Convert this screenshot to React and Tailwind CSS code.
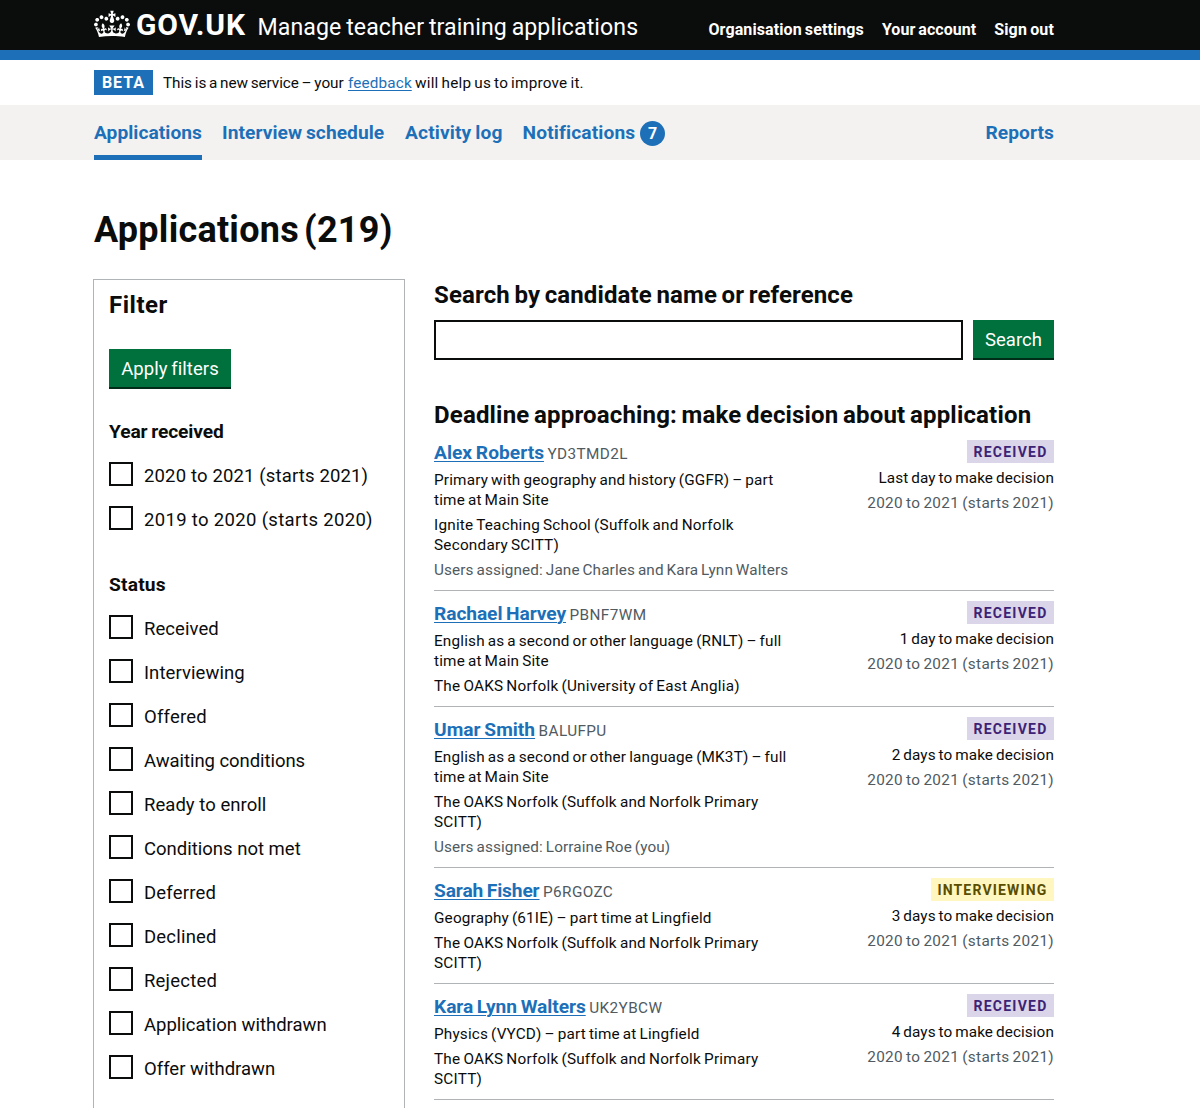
import React from 'react';

const years = [
  { label: '2020 to 2021 (starts 2021)', tracking: 'tracking-[0.15px]' },
  { label: '2019 to 2020 (starts 2020)', tracking: 'tracking-[0.33px]' },
];

const statuses = [
  { label: 'Received', tracking: 'tracking-[0.06px]' },
  { label: 'Interviewing', tracking: 'tracking-[0.08px]' },
  { label: 'Offered', tracking: 'tracking-[0.2px]' },
  { label: 'Awaiting conditions', tracking: 'tracking-[-0.06px]' },
  { label: 'Ready to enroll', tracking: 'tracking-[0.04px]' },
  { label: 'Conditions not met' },
  { label: 'Deferred', tracking: 'tracking-[0.2px]' },
  { label: 'Declined', tracking: 'tracking-[0.2px]' },
  { label: 'Rejected', tracking: 'tracking-[0.2px]' },
  { label: 'Application withdrawn' },
  { label: 'Offer withdrawn' },
];

const applications = [
  {
    name: 'Alex Roberts',
    tracking: 'tracking-[0px]',
    reference: 'YD3TMD2L',
    course: ['Primary with geography and history (GGFR) – part', 'time at Main Site'],
    provider: ['Ignite Teaching School (Suffolk and Norfolk', 'Secondary SCITT)'],
    users: 'Users assigned: Jane Charles and Kara Lynn Walters',
    status: 'Received',
    deadline: 'Last day to make decision',
  },
  {
    name: 'Rachael Harvey',
    tracking: 'tracking-[-0.09px]',
    reference: 'PBNF7WM',
    course: ['English as a second or other language (RNLT) – full', 'time at Main Site'],
    provider: ['The OAKS Norfolk (University of East Anglia)'],
    status: 'Received',
    deadline: '1 day to make decision',
  },
  {
    name: 'Umar Smith',
    tracking: 'tracking-[0px]',
    reference: 'BALUFPU',
    course: ['English as a second or other language (MK3T) – full', 'time at Main Site'],
    provider: ['The OAKS Norfolk (Suffolk and Norfolk Primary', 'SCITT)'],
    users: 'Users assigned: Lorraine Roe (you)',
    status: 'Received',
    deadline: '2 days to make decision',
  },
  {
    name: 'Sarah Fisher',
    tracking: 'tracking-[-0.14px]',
    reference: 'P6RGOZC',
    course: ['Geography (61IE) – part time at Lingfield'],
    provider: ['The OAKS Norfolk (Suffolk and Norfolk Primary', 'SCITT)'],
    status: 'Interviewing',
    deadline: '3 days to make decision',
  },
  {
    name: 'Kara Lynn Walters',
    tracking: 'tracking-[-0.07px]',
    reference: 'UK2YBCW',
    course: ['Physics (VYCD) – part time at Lingfield'],
    provider: ['The OAKS Norfolk (Suffolk and Norfolk Primary', 'SCITT)'],
    status: 'Received',
    deadline: '4 days to make decision',
  },
];

function Crown() {
  return (
    <svg aria-hidden="true" viewBox="0 0 132 97" className="h-[30px] w-9 shrink-0" fill="currentColor" fillRule="evenodd">
      <path d="M25 30.2c3.5 1.5 7.7-.2 9.1-3.7 1.5-3.6-.2-7.8-3.9-9.2-3.6-1.4-7.6.3-9.1 3.9-1.4 3.5.3 7.5 3.9 9zM9 39.5c3.6 1.5 7.8-.2 9.2-3.7 1.5-3.6-.2-7.8-3.9-9.1-3.6-1.5-7.6.2-9.1 3.8-1.4 3.5.3 7.5 3.8 9zM4.4 57.2c3.5 1.5 7.7-.2 9.1-3.8 1.5-3.6-.2-7.7-3.9-9.1-3.5-1.5-7.6.3-9.1 3.8-1.4 3.5.3 7.6 3.9 9.1zm38.3-21.4c3.5 1.5 7.7-.2 9.1-3.8 1.5-3.6-.2-7.7-3.9-9.1-3.6-1.5-7.6.3-9.1 3.8-1.3 3.6.4 7.7 3.9 9.1zm64.4-5.6c-3.6 1.5-7.8-.2-9.1-3.7-1.5-3.6.2-7.8 3.8-9.2 3.6-1.4 7.7.3 9.2 3.9 1.3 3.5-.4 7.5-3.9 9zm15.9 9.3c-3.6 1.5-7.7-.2-9.1-3.7-1.5-3.6.2-7.8 3.7-9.1 3.6-1.5 7.7.2 9.2 3.8 1.5 3.5-.3 7.5-3.8 9zm4.7 17.7c-3.6 1.5-7.8-.2-9.2-3.8-1.5-3.6.2-7.7 3.9-9.1 3.6-1.5 7.7.3 9.2 3.8 1.3 3.5-.4 7.6-3.9 9.1zM89.3 35.8c-3.6 1.5-7.8-.2-9.2-3.8-1.4-3.6.2-7.7 3.9-9.1 3.6-1.5 7.7.3 9.2 3.8 1.4 3.6-.3 7.7-3.9 9.1zM69.7 17.7l8.9 4.7V9.3l-8.9 2.8c-.2-.3-.5-.6-.9-.9L72.4 0H59.6l3.5 11.2c-.3.3-.6.5-.9.9l-8.8-2.8v13.1l8.8-4.7c.3.3.6.7.9.9l-5 15.4v.1c-.2.8-.4 1.6-.4 2.4 0 4.1 3.1 7.5 7 8.1h.2c.3 0 .7.1 1 .1.4 0 .7 0 1-.1h.2c4-.6 7.1-4.1 7.1-8.1 0-.8-.1-1.7-.4-2.4V34l-5.1-15.4c.4-.2.7-.6 1-.9zM66 92.8c16.9 0 32.8 1.1 47.1 3.2 4-16.9 8.9-26.7 14-33.5l-9.6-3.4c1 4.9 1.1 7.2 0 10.2-1.5-1.4-3-4.3-4.2-8.7L108.6 76c2.8-2 5-3.2 7.5-3.3-4.4 9.4-10 11.9-13.6 11.2-4.3-.8-6.3-4.6-5.6-7.9 1-4.7 5.7-5.9 8-.5 4.3-8.7-3-11.4-7.6-8.8 7.1-7.2 7.9-13.5 2.1-21.1-8 6.1-8.1 12.3-4.5 20.8-4.7-5.4-12.1-2.5-9.5 6.2 3.4-5.2 7.9-2 7.2 3.1-.6 4.3-6.4 7.8-13.5 7.2-10.3-.9-10.9-8-11.2-13.8 2.5-.5 7.1 1.8 11 7.3L80.2 60c-4.1 4.4-8 5.3-12.3 5.4 1.4-4.4 8-11.6 8-11.6H55.5s6.4 7.2 7.9 11.6c-4.2-.1-8-1-12.3-5.4l1.4 16.4c3.9-5.5 8.5-7.7 10.9-7.3-.3 5.8-.9 12.8-11.1 13.8-7.2.6-12.9-2.9-13.5-7.2-.7-5 3.8-8.3 7.1-3.1 2.7-8.7-4.6-11.6-9.4-6.2 3.7-8.5 3.6-14.7-4.6-20.8-5.8 7.6-5 13.9 2.2 21.1-4.7-2.6-11.9.1-7.7 8.8 2.3-5.5 7.1-4.2 8.1.5.7 3.3-1.3 7.1-5.7 7.9-3.5.7-9-1.8-13.5-11.2 2.5.1 4.7 1.3 7.5 3.3l-4.7-15.4c-1.2 4.4-2.7 7.2-4.3 8.7-1.1-3-.9-5.3 0-10.2l-9.5 3.4c5 6.9 9.9 16.7 14 33.5 14.8-2.1 30.8-3.2 47.7-3.2z" />
    </svg>
  );
}

function Header() {
  return (
    <header className="h-[60px] border-b-[10px] border-[#1d70b8] bg-[#0b0c0c] text-white">
      <div className="ml-[94px] flex h-[50px] w-[960px] items-start whitespace-nowrap">
        <a className="flex items-start pt-[9px]" href="#">
          <Crown />
          <span className="ml-[6px] w-[121.5px] text-[30px] font-bold leading-[31px] tracking-[0.85px]">GOV.UK</span>
        </a>
        <a className="pt-[13px] text-[23.14px] leading-[30px] tracking-[0.08px] [word-spacing:-1px]" href="#">Manage teacher training applications</a>
        <nav className="ml-auto flex gap-[18px] pt-5 text-base font-bold leading-5 [word-spacing:-1px]">
          <a href="#" className="tracking-[0.1px]">Organisation settings</a>
          <a href="#" className="tracking-[0.04px]">Your account</a>
          <a href="#" className="tracking-[0.15px]">Sign out</a>
        </nav>
      </div>
    </header>
  );
}

function PhaseBanner() {
  return (
    <div className="ml-[94px] flex h-[45px] w-[960px] items-center whitespace-nowrap">
      <strong className="h-[25px] w-[59px] bg-[#1d70b8] pl-2 text-base font-bold leading-[25px] tracking-[0.9px] text-white">BETA</strong>
      <p className="ml-2.5 flex text-[15.3px] leading-5 [word-spacing:-1px]">
        <span className="w-[185px] tracking-[-0.05px]">This is a new service – your</span>
        <a href="#" className="w-[64px] tracking-[0.14px] text-[#1d70b8] underline underline-offset-[2px]">feedback</a>
        <span className="ml-[3px] tracking-[0.22px]">will help us to improve it.</span>
      </p>
    </div>
  );
}

function PrimaryNav() {
  return (
    <nav className="h-[55px] bg-[#f3f2f1]">
      <div className="ml-[94px] flex h-full w-[960px] whitespace-nowrap text-[19.2px] font-bold leading-[55px] text-[#1d70b8]">
        <a href="#" className="mr-5 w-[108px] border-b-[5px] border-[#1d70b8] tracking-[0.03px]">Applications</a>
        <a href="#" className="mr-5 w-[163px] tracking-[0.05px] [word-spacing:-1px]">Interview schedule</a>
        <a href="#" className="mr-[19.5px] w-[98px] tracking-[0.12px] [word-spacing:-1px]">Activity log</a>
        <a href="#" className="flex">
          <span className="w-[117.5px] tracking-[0.13px]">Notifications</span>
          <span className="mt-4 flex size-[25px] items-center justify-center rounded-full bg-[#1d70b8] text-base leading-none text-white">7</span>
        </a>
        <a href="#" className="ml-auto tracking-[0.06px]">Reports</a>
      </div>
    </nav>
  );
}

function FilterGroup({ title, titleTracking, options }) {
  return (
    <fieldset>
      <legend className={`text-[19.2px] font-bold leading-6 ${titleTracking}`}>{title}</legend>
      <div className="mt-[18px] flex flex-col gap-5">
        {options.map((option) => (
          <label key={option.label} className="flex h-6 items-start whitespace-nowrap">
            <input type="checkbox" className="size-6 shrink-0 appearance-none border-2 border-[#0b0c0c] bg-white" />
            <span className={`ml-[11px] pt-0.5 text-[18.5px] leading-6 ${option.tracking || ''}`}>{option.label}</span>
          </label>
        ))}
      </div>
    </fieldset>
  );
}

function Filters() {
  return (
    <aside className="-ml-px w-[312px] shrink-0 border border-[#b1b4b6] px-[15px] pb-[60px] pt-[10px]">
      <h2 className="text-2xl font-bold leading-[30px] tracking-[0.5px]">Filter</h2>
      <button className="mb-[31px] mt-[29px] block h-[40px] w-[122px] border-b-2 border-[#002d18] bg-[#00703c] pt-px text-[18.5px] leading-[38px] tracking-[0.06px] text-white [word-spacing:-1px]">Apply filters</button>
      <FilterGroup title="Year received" titleTracking="tracking-[-0.1px] [word-spacing:-1px]" options={years} />
      <div className="h-[43px]" />
      <FilterGroup title="Status" titleTracking="tracking-[0.2px]" options={statuses} />
    </aside>
  );
}

function Tag({ status }) {
  const colours = status === 'Interviewing' ? 'bg-[#fff7bf] text-[#594d00] tracking-[1.17px]' : 'bg-[#dbd5e9] text-[#3d2375] tracking-[1.25px]';
  return (
    <strong className={`h-[23px] pl-[6.5px] pr-[6.5px] text-sm font-bold uppercase leading-[24px] ${colours}`}>{status}</strong>
  );
}

function Lines({ lines, tracking }) {
  return (
    <p className={`mt-[5px] ${tracking}`}>
      {lines.map((line) => (
        <span key={line} className="block">{line}</span>
      ))}
    </p>
  );
}

function Application({ item }) {
  return (
    <article className="flex justify-between whitespace-nowrap border-b border-[#b1b4b6] py-2.5 text-[15.3px] leading-5 [word-spacing:-1px]">
      <div>
        <h3 className="flex h-[25px] items-baseline text-[19.2px] leading-[25px]">
          <a href="#" className={`font-bold text-[#1d70b8] underline decoration-1 underline-offset-[2px] ${item.tracking}`}>{item.name}</a>
          <span className="ml-[3.5px] text-[15.3px] tracking-[0.4px] text-[#505a5f]">{item.reference}</span>
        </h3>
        <Lines lines={item.course} tracking="tracking-[0.18px]" />
        <Lines lines={item.provider} tracking="tracking-[0.23px]" />
        {item.users && <p className="mt-[5px] tracking-[0.12px] text-[#505a5f]">{item.users}</p>}
      </div>
      <div className="flex flex-col items-end">
        <Tag status={item.status} />
        <p className="mt-[5px] tracking-[0.1px]">{item.deadline}</p>
        <p className="mt-[5px] tracking-[0.33px] text-[#505a5f]">2020 to 2021 (starts 2021)</p>
      </div>
    </article>
  );
}

export default function App() {
  return (
    <div className="h-[1108px] overflow-hidden bg-white font-[Roboto,sans-serif] text-[#0b0c0c]">
      <Header />
      <PhaseBanner />
      <PrimaryNav />
      <main className="ml-[94px] w-[960px] pt-[50px]">
        <h1 className="text-4xl font-bold leading-10 tracking-[0.25px] [word-spacing:-4px]">Applications (219)</h1>
        <div className="mt-[29px] flex gap-[29px]">
          <Filters />
          <section className="w-[620px]">
            <h2 className="mt-px text-2xl font-bold leading-[30px] tracking-[0.12px] [word-spacing:-1.5px]">Search by candidate name or reference</h2>
            <div className="mt-[10px] flex gap-2.5">
              <input type="text" className="h-10 w-[529px] border-2 border-[#0b0c0c] bg-white" />
              <button className="h-10 w-[81px] border-b-2 border-[#002d18] bg-[#00703c] pt-px text-[18.5px] leading-[38px] text-white">Search</button>
            </div>
            <h2 className="mt-[40px] h-[30px] whitespace-nowrap text-2xl font-bold leading-[30px] tracking-[0.17px] [word-spacing:-1.5px]">Deadline approaching: make decision about application</h2>
            {applications.map((item) => (
              <Application key={item.reference} item={item} />
            ))}
          </section>
        </div>
      </main>
    </div>
  );
}
